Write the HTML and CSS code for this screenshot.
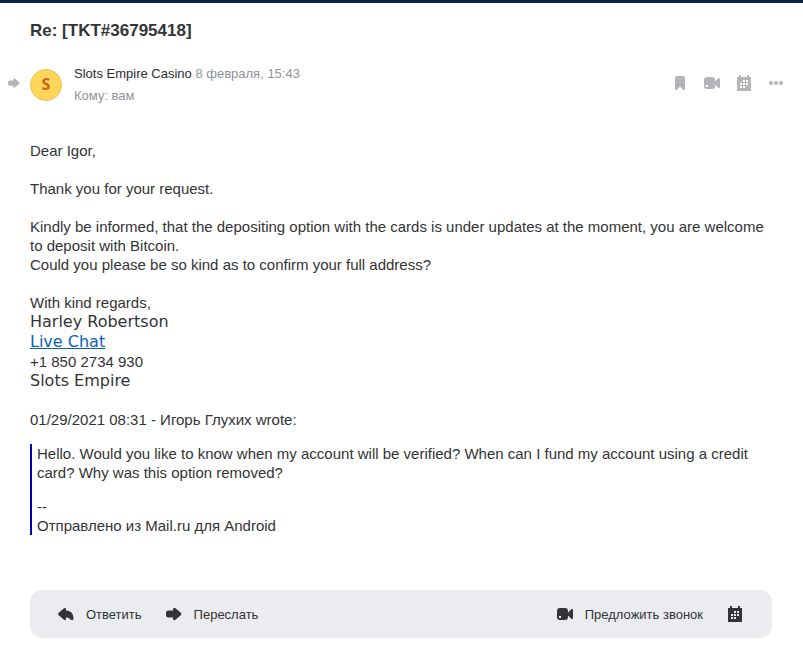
FILE: index.html
```html
<!DOCTYPE html>
<html lang="ru">
<head>
  <meta charset="UTF-8" />
  <meta name="viewport" content="width=device-width, initial-scale=1.0"/>
  <title>Re: [TKT#36795418]</title>
  <link rel="stylesheet" href="styles.css">
</head>
<body>
  <!-- shared icons -->
  <svg class="sprite" width="0" height="0" aria-hidden="true">
    <symbol id="i-camera" viewBox="0 0 16 16">
      <path fill-rule="evenodd" d="M3 2h5Q11 2 11 5v6q0 3-3 3H3Q0 14 0 11V5Q0 2 3 2zM2 10v2h2v-2z"/>
      <path d="M11 6.500L14.500 3Q16 2.500 16 4v8q0 1.500-1.500 1L11 9.500z"/>
    </symbol>
    <symbol id="i-calendar" viewBox="0 0 16 16">
      <path fill-rule="evenodd" d="M1 2h2V0h2v2h6V0h2v2h2v14H1zM7 5v2h2V5zM10 5v2h2V5zM4 8v2h2V8zM7 8v2h2V8zM10 8v2h2V8zM4 11v2h2v-2zM7 11v2h2v-2z"/>
    </symbol>
    <symbol id="i-forward" viewBox="0 0 16 16">
      <path d="M7 3.500Q7 1 9.500 2.200L14.500 6.500Q16.300 8 14.500 9.500L9.500 13.800Q7 15 7 12.500V11.500H2.500Q0 11.500 0 9V7Q0 4.500 2.500 4.500H7z"/>
    </symbol>
    <symbol id="i-reply" viewBox="0 0 16 16">
      <path d="M8 3.500Q8 1 6 2.200L1 6.500Q-.8 8 1 9.500L6 13.800Q8 15 8 12.500V11.500Q11 11.200 12.500 13.500Q15.500 15.500 15.500 12Q15 4.800 8 4.500z"/>
    </symbol>
  </svg>

  <main class="letter">
    <h1 class="subject">Re: [TKT#36795418]</h1>

    <header class="head">
      <button class="icon-btn mark" aria-label="Переслано"><svg><use href="#i-forward"/></svg></button>
      <div class="avatar">S</div>
      <div class="author">
        <div><span class="name">Slots Empire Casino</span> 8 февраля, 15:43</div>
        <div>Кому: вам</div>
      </div>
      <div class="tools">
        <button class="icon-btn" aria-label="Флажок"><svg viewBox="0 0 16 16"><path d="M3 2.500Q3 1 4.500 1h7Q13 1 13 2.500V15h-1.500L8 11.500 4.500 15H3z"/></svg></button>
        <button class="icon-btn" aria-label="Звонок"><svg><use href="#i-camera"/></svg></button>
        <button class="icon-btn" aria-label="Календарь"><svg><use href="#i-calendar"/></svg></button>
        <button class="icon-btn" aria-label="Ещё"><svg viewBox="0 0 16 16"><circle cx="3" cy="8" r="2"/><circle cx="8" cy="8" r="2"/><circle cx="13" cy="8" r="2"/></svg></button>
      </div>
    </header>

    <article class="body" lang="en">
      <p>Dear Igor,</p>
      <p>Thank you for your request.</p>
      <p>Kindly be informed, that the depositing option with the cards is under updates at the moment, you are welcome to deposit with Bitcoin.<br>
      Could you please be so kind as to confirm your full address?</p>
      <div>With kind regards,</div>
      <div class="sign">Harley Robertson</div>
      <div class="sign"><a href="#">Live Chat</a></div>
      <div>+1 850 2734 930</div>
      <div class="sign">Slots Empire</div>
      <div class="wrote">01/29/2021 08:31 - Игорь Глухих wrote:</div>
      <blockquote class="quote">
        <div>Hello. Would you like to know when my account will be verified? When can I fund my account using a credit card? Why was this option removed?</div>
        <div class="quote-sign">--<br>Отправлено из Mail.ru для Android</div>
      </blockquote>
    </article>

    <footer class="actions">
      <button><svg><use href="#i-reply"/></svg>Ответить</button>
      <button><svg><use href="#i-forward"/></svg>Переслать</button>
      <button class="call"><svg><use href="#i-camera"/></svg>Предложить звонок</button>
      <button aria-label="Календарь"><svg><use href="#i-calendar"/></svg></button>
    </footer>
  </main>
</body>
</html>
```
FILE: styles.css
```css
* {
  box-sizing: border-box;
}
body {
  margin: 0;
  border-top: 3px solid #0b1f4b;
  background: #fff;
  color: #333435;
  font-family: Arial, "Liberation Sans", sans-serif;
  font-size: 15px;
  line-height: 19px;
}
.sprite {
  position: absolute;
}
button {
  display: flex;
  align-items: center;
  padding: 0;
  border: 0;
  background: none;
  color: inherit;
  font: inherit;
  cursor: pointer;
}
svg {
  width: 16px;
  height: 16px;
  fill: currentColor;
}
.letter {
  padding: 16px 31px 20px 30px;
}
.subject {
  margin: 0;
  font-size: 17px;
  line-height: 24px;
}
.head {
  display: flex;
  align-items: center;
  margin: 20px -12px 0 -22px;
  color: #919399;
  font-size: 13px;
  line-height: 22px;
}
.icon-btn {
  padding-bottom: 4px;
  color: #b4b5b9;
}
.mark svg {
  width: 12px;
  height: 12px;
}
.avatar {
  width: 32px;
  height: 32px;
  margin: 0 12px 0 10px;
  border: 1px solid #eabf55;
  border-radius: 50%;
  background: #ffd657;
  color: #c8641e;
  font: bold 16px/28px "Open Sans", sans-serif;
  text-align: center;
}
.name {
  color: #2c2d2e;
}
.tools {
  display: flex;
  gap: 16px;
  margin-left: auto;
}
.body {
  margin-top: 34px;
}
.body p {
  margin: 0 0 19px;
}
.sign {
  font-family: Verdana, "DejaVu Sans", sans-serif;
  font-size: 16px;
  line-height: 20px;
}
.sign a {
  color: #0b5fb8;
}
.wrote {
  margin-top: 19px;
}
.quote {
  margin: 15px 0 0;
  padding-left: 5px;
  border-left: 2px solid #0000b8;
}
.quote-sign {
  margin-top: 15px;
}
.actions {
  display: flex;
  align-items: center;
  gap: 24px;
  height: 48px;
  margin-top: 55px;
  padding: 0 29px 0 28px;
  border-radius: 12px;
  background: #ebecef;
  font-size: 13px;
}
.actions button {
  gap: 12px;
}
.call {
  margin-left: auto;
}
```
